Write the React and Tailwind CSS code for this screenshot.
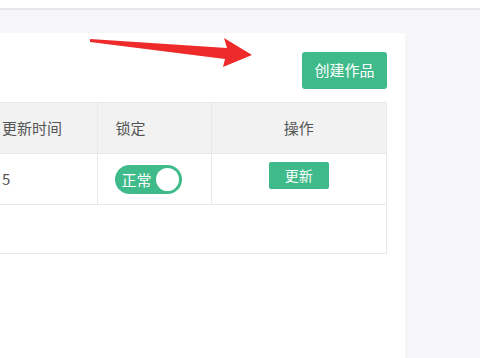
export default function App() {
  return (
    <div
      className="relative w-[480px] h-[358px] overflow-hidden bg-[#f6f6f9]"
      style={{ fontFamily: '"Noto Sans CJK SC", "Noto Sans", sans-serif' }}
    >
      {/* top bar */}
      <div className="h-[10px] bg-white border-b-2 border-[#e6e6ec]" />

      <div className="pt-[23px] pr-[75px]">
        <div className="bg-white h-[330px] pr-[18px]">
          <div className="flex justify-end pt-[19px] pb-[13px]">
            <button className="w-[85px] h-[37px] rounded-[3px] bg-[#3fba8a] text-white text-[15px]">
              创建作品
            </button>
          </div>

          <table className="w-[387px] border-collapse text-[#555] text-[15px]">
            <thead>
              <tr className="bg-[#f2f2f2] h-[51px]">
                <th className="w-[97px] font-normal text-left pl-[2px] border border-l-0 border-[#e8e8e8]">更新时间</th>
                <th className="w-[114px] font-normal text-left pl-[18px] border border-[#e8e8e8]">锁定</th>
                <th className="font-normal text-center border border-[#e8e8e8]">操作</th>
              </tr>
            </thead>
            <tbody>
              <tr className="h-[51px]">
                <td className="pl-[2px] border border-l-0 border-[#e8e8e8]">5</td>
                <td className="pl-[17px] border border-[#e8e8e8]">
                  <div className="w-[67px] h-[29px] rounded-full bg-[#3fba8a] flex items-center justify-between pl-[7px] pr-[3px]">
                    <span className="text-white text-[15px] leading-none">正常</span>
                    <span className="w-[23px] h-[23px] rounded-full bg-white" />
                  </div>
                </td>
                <td className="text-center border border-[#e8e8e8]">
                  <button className="w-[60px] h-[27px] rounded-[2px] bg-[#3fba8a] text-white text-[14px] -mt-[10px] align-middle">
                    更新
                  </button>
                </td>
              </tr>
              <tr className="h-[49px]">
                <td colSpan={3} className="border border-l-0 border-[#e8e8e8]" />
              </tr>
            </tbody>
          </table>
        </div>
      </div>

      {/* red arrow annotation */}
      <svg className="absolute left-0 top-0" width="480" height="358" viewBox="0 0 480 358">
        <polygon
          points="90,39 227,48 224,38 252,55 223,67 225,59 90,42"
          fill="#ee2a2a"
        />
      </svg>
    </div>
  );
}
